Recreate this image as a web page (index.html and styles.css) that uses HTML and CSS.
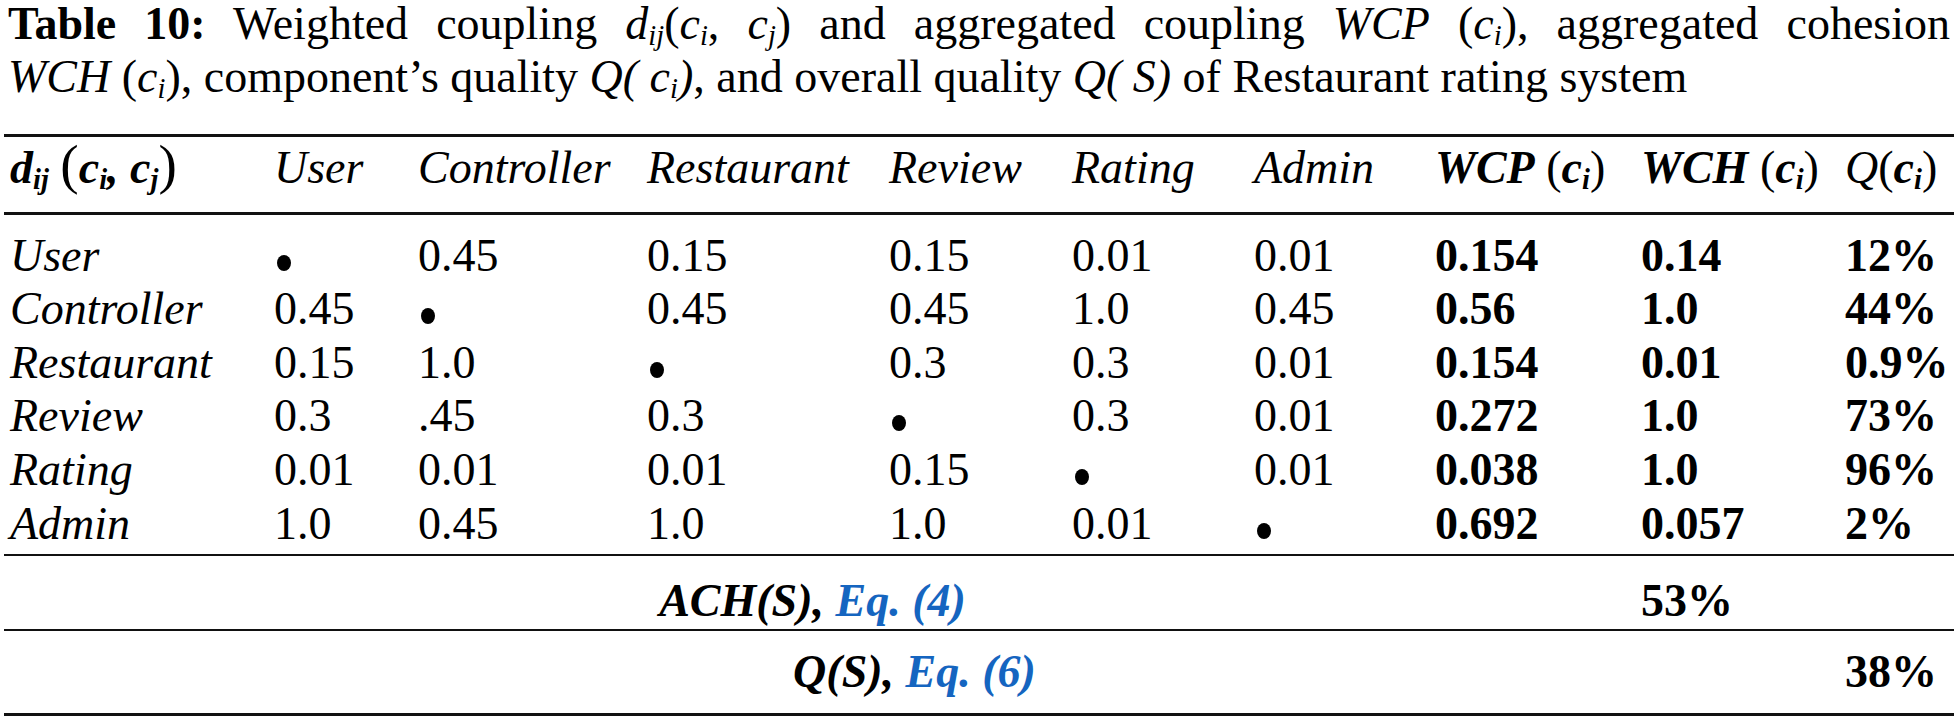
FILE: index.html
```html
<!DOCTYPE html>
<html lang="en">
<head>
    <meta charset="UTF-8">
    <title>Table 10 - Restaurant rating system</title>
    <link rel="stylesheet" href="styles.css">
</head>
<body>
    <p class="caption">
        <span class="line-one"><b>Table 10:</b> Weighted coupling <i>d<sub>ij</sub></i>(<i>c<sub>i</sub></i>, <i>c<sub>j</sub></i>) and aggregated coupling <i>WCP</i> (<i>c<sub>i</sub></i>), aggregated cohesion</span>
        <span class="line-two"><i>WCH</i> (<i>c<sub>i</sub></i>), component’s quality <i>Q( c<sub>i</sub>)</i>, and overall quality <i>Q( S)</i> of Restaurant rating system</span>
    </p>

    <table class="quality">
        <colgroup>
            <col style="width: 270px">
            <col style="width: 144px">
            <col style="width: 229px">
            <col style="width: 242px">
            <col style="width: 183px">
            <col style="width: 182px">
            <col style="width: 181px">
            <col style="width: 206px">
            <col style="width: 204px">
            <col>
        </colgroup>
        <thead>
            <tr>
                <th><span class="bi">d<sub>ij</sub></span> <span class="big">(</span><span class="bi">c<sub>i</sub>, c<sub>j</sub></span><span class="big">)</span></th>
                <th>User</th>
                <th>Controller</th>
                <th>Restaurant</th>
                <th>Review</th>
                <th>Rating</th>
                <th>Admin</th>
                <th><span class="bi">WCP</span> <span class="up">(</span><span class="bi">c<sub>i</sub></span><span class="up">)</span></th>
                <th><span class="bi">WCH</span> <span class="up">(</span><span class="bi">c<sub>i</sub></span><span class="up">)</span></th>
                <th>Q<span class="up">(</span><span class="bi">c<sub>i</sub></span><span class="up">)</span></th>
            </tr>
        </thead>
        <tbody class="data">
            <tr class="first">
                <td class="name">User</td><td><span class="dot"></span></td><td>0.45</td><td>0.15</td><td>0.15</td><td>0.01</td><td>0.01</td>
                <td class="b">0.154</td><td class="b">0.14</td><td class="b">12%</td>
            </tr>
            <tr>
                <td class="name">Controller</td><td>0.45</td><td><span class="dot"></span></td><td>0.45</td><td>0.45</td><td>1.0</td><td>0.45</td>
                <td class="b">0.56</td><td class="b">1.0</td><td class="b">44%</td>
            </tr>
            <tr>
                <td class="name">Restaurant</td><td>0.15</td><td>1.0</td><td><span class="dot"></span></td><td>0.3</td><td>0.3</td><td>0.01</td>
                <td class="b">0.154</td><td class="b">0.01</td><td class="b">0.9%</td>
            </tr>
            <tr>
                <td class="name">Review</td><td>0.3</td><td>.45</td><td>0.3</td><td><span class="dot"></span></td><td>0.3</td><td>0.01</td>
                <td class="b">0.272</td><td class="b">1.0</td><td class="b">73%</td>
            </tr>
            <tr>
                <td class="name">Rating</td><td>0.01</td><td>0.01</td><td>0.01</td><td>0.15</td><td><span class="dot"></span></td><td>0.01</td>
                <td class="b">0.038</td><td class="b">1.0</td><td class="b">96%</td>
            </tr>
            <tr class="last">
                <td class="name">Admin</td><td>1.0</td><td>0.45</td><td>1.0</td><td>1.0</td><td>0.01</td><td><span class="dot"></span></td>
                <td class="b">0.692</td><td class="b">0.057</td><td class="b">2%</td>
            </tr>
        </tbody>
        <tbody>
            <tr class="ach">
                <td colspan="8" class="label"><span class="bi">ACH(S),</span> <span class="bi eq">Eq. (4)</span></td>
                <td class="b">53%</td>
                <td></td>
            </tr>
            <tr class="total">
                <td colspan="9" class="label"><span class="bi">Q(S),</span> <span class="bi eq">Eq. (6)</span></td>
                <td class="b">38%</td>
            </tr>
        </tbody>
    </table>
</body>
</html>
```

FILE: styles.css
```css
/* Tabel calitate */
body {
    margin: 0;
    padding: 0 0 0 4px;
    font-family: "Liberation Serif", "Times New Roman", serif;
    font-size: 46px;
    color: #000;
    background: #fff;
}
sub {
    font-size: 0.62em;
    line-height: 0;
    vertical-align: -0.22em;
}
.caption {
    margin: 0 4px 0 4px;
    line-height: 46px;
}
.line-one {
    display: block;
    text-align: justify;
    text-align-last: justify;
    height: 46px;
    margin-top: 1px;
}
.line-two {
    display: block;
    margin-top: 7px;
}
.quality {
    margin-top: 34px;
    width: 1950px;
    border-collapse: collapse;
    table-layout: fixed;
    line-height: 53.6px;
}
.quality th, .quality td {
    padding: 0;
    text-align: left;
    white-space: nowrap;
    vertical-align: baseline;
}
.quality th:first-child, .quality td:first-child {
    padding-left: 6px;
}
.quality thead tr {
    border-top: 3px solid #111;
    border-bottom: 3px solid #111;
}
.quality th {
    font-weight: normal;
    font-style: italic;
    padding-top: 4px;
    padding-bottom: 17px;
}
.bi {
    font-weight: bold;
    font-style: italic;
}
.up {
    font-style: normal;
    font-weight: normal;
}
.big {
    font-style: normal;
    font-weight: normal;
    font-size: 1.2em;
    line-height: 0;
}
.name {
    font-style: italic;
}
.b {
    font-weight: bold;
}
.dot {
    display: inline-block;
    width: 14px;
    height: 16px;
    margin-left: 3px;
    border-radius: 50%;
    background: #000;
    vertical-align: 0;
}
.data tr.first td {
    padding-top: 14px;
}
.data tr.last td {
    padding-bottom: 4px;
}
.data tr.last {
    border-bottom: 2px solid #111;
}
.ach {
    border-bottom: 2px solid #111;
}
.ach td {
    padding-top: 18px;
    padding-bottom: 1px;
}
.total {
    border-bottom: 3px solid #111;
}
.total td {
    padding-top: 14px;
    padding-bottom: 15px;
}
.quality td.label {
    text-align: center;
    padding-left: 0;
}
.ach td.label {
    padding-right: 20px;
}
.total td.label {
    padding-right: 20px;
}
.eq {
    color: #1565c0;
}
```
